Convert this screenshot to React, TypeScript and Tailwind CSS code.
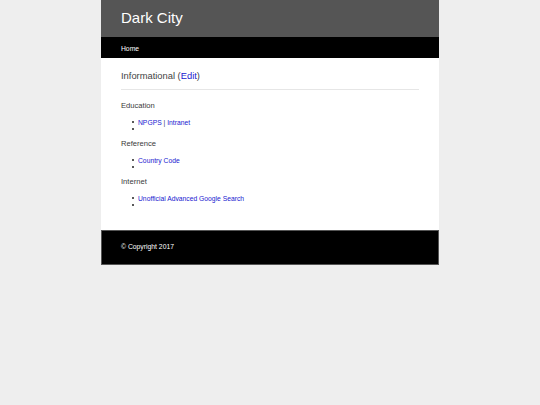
const sections = [
  { title: "Education", links: [["NPGPS", "Intranet"]] },
  { title: "Reference", links: [["Country Code"]] },
  { title: "Internet", links: [["Unofficial Advanced Google Search"]] }
];

function Bullet({ children }: { children?: React.ReactNode }) {
  return (
    <li className="flex h-[7px] items-center">
      <span className="mr-[4px] h-[2px] w-[2px] shrink-0 rounded-full bg-[#222222]" />
      <span>{children}</span>
    </li>
  );
}

export default function App() {
  return (
    <div className="min-h-screen bg-[#eeeeee] font-['Liberation_Sans',Arial,sans-serif]">
      <div className="mx-auto w-[338px]">
        <header className="flex h-[37px] items-center bg-[#555555] px-5 text-[15px] text-white">Dark City</header>
        <nav className="h-[21px] bg-black px-5 pt-[1px] text-[6.75px] leading-[21px] text-white">Home</nav>

        <main className="bg-white px-5 pt-[12px] pb-[21.5px] text-[#3a3a3a]">
          <h2 className="border-b border-[#e6e6e6] pb-[7px] text-[9.35px] leading-[12px] text-[#444444]">
            Informational (<a className="text-[#2020d0]">Edit</a>)
          </h2>

          {sections.map((section, i) => (
            <section key={section.title}>
              <h3 className={`${i === 0 ? "mt-[11px]" : "mt-[6.5px]"} text-[7.6px] leading-[10px]`}>{section.title}</h3>
              <ul className="mt-[7.5px] pl-[11px] text-[6.75px] leading-[7px]">
                {section.links.map((row) => (
                  <Bullet key={row.join()}>
                    {row.map((label, j) => (
                      <span key={label}>
                        {j > 0 && <span className="text-[#2a2a7a]">{" | "}</span>}
                        <a className="text-[#2020d0]">{label}</a>
                      </span>
                    ))}
                  </Bullet>
                ))}
                <Bullet />
              </ul>
            </section>
          ))}
        </main>

        <footer className="flex h-[35px] items-center border border-[#555555] bg-black px-[19px] text-[6.8px] text-white">
          © Copyright 2017
        </footer>
      </div>
    </div>
  );
}
